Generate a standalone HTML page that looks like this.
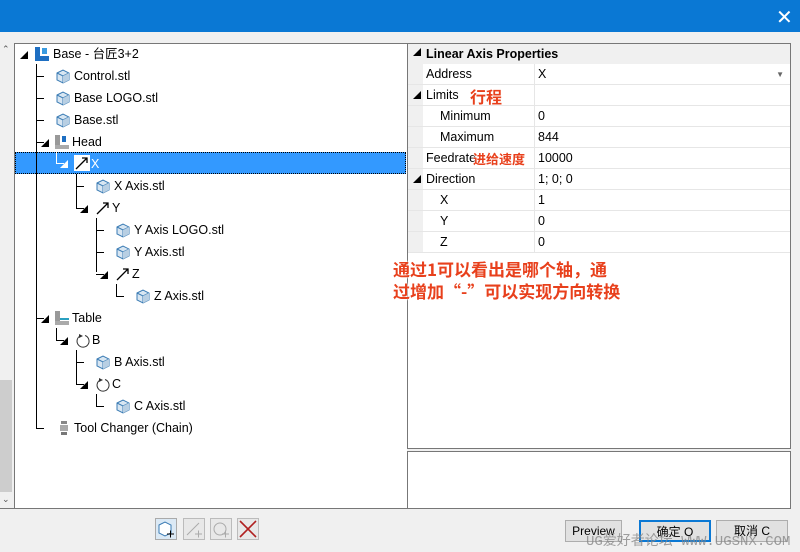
<!DOCTYPE html>
<html><head><meta charset="utf-8"><style>
*{margin:0;padding:0;box-sizing:border-box}
body{width:800px;height:552px;overflow:hidden;background:#f0f0f0;font-family:"Liberation Sans","Noto Sans CJK SC",sans-serif;font-size:12px;color:#000;position:relative}
.abs{position:absolute}
.t{position:absolute;white-space:nowrap;font-size:12.5px;line-height:22px}
.cube{position:absolute;width:16px;height:16px}
.vl{position:absolute;width:1px;background:#000}
.hl{position:absolute;height:1px;background:#000}
.row{position:absolute;left:408px;width:382px;height:21px;border-bottom:1px solid #e6e6e6;font-size:12.5px;line-height:21px}
.row .n{position:absolute;left:18px}
.row .v{position:absolute;left:130px}
.row .sep{position:absolute;left:126px;top:0;width:1px;height:21px;background:#e6e6e6}
.ann{color:#e8401c;font-weight:bold;font-family:"Noto Sans CJK SC",sans-serif;text-shadow:0 0 2px #fff,0 0 2px #fff}
.btn{position:absolute;top:520px;height:22px;border:1px solid #adadad;background:#e1e1e1;font-size:12px;text-align:center;line-height:20px}
</style></head><body>
<div class="abs" style="left:0;top:0;width:800px;height:32px;background:#0a78d4"></div>
<div class="abs" style="left:776px;top:5px;color:#fff;font-size:20px">✕</div>

<!-- left scrollbar -->
<div class="abs" style="left:0;top:43px;width:13px;height:465px;background:#f0f0f0"></div>
<div class="abs" style="left:0;top:380px;width:12px;height:112px;background:#cdcdcd"></div>
<div class="abs" style="left:2px;top:44px;font-size:9px;color:#555">⌃</div>
<div class="abs" style="left:2px;top:494px;font-size:9px;color:#555">⌄</div>
<!-- tree panel -->
<div class="abs" style="left:14px;top:43px;width:393px;height:466px;background:#fff;border-left:1px solid #777;border-top:1px solid #777;border-bottom:1px solid #777"></div>
<div class="abs" style="left:15px;top:152px;width:391px;height:22px;background:#3399ff;outline:1px dotted #000;outline-offset:-1px"></div>

<!-- tree lines -->
<div class="vl" style="left:36px;top:64px;height:364px"></div>
<div class="hl" style="left:36px;top:76px;width:8px"></div>
<div class="hl" style="left:36px;top:98px;width:8px"></div>
<div class="hl" style="left:36px;top:120px;width:8px"></div>
<div class="hl" style="left:36px;top:142px;width:8px"></div>
<div class="hl" style="left:36px;top:318px;width:8px"></div>
<div class="hl" style="left:36px;top:428px;width:8px"></div>
<div class="vl" style="left:56px;top:152px;height:11px;background:#fff"></div>
<div class="hl" style="left:56px;top:163px;width:8px;background:#fff"></div>
<div class="vl" style="left:56px;top:328px;height:12px"></div>
<div class="hl" style="left:56px;top:340px;width:8px"></div>
<div class="vl" style="left:76px;top:174px;height:34px"></div>
<div class="hl" style="left:76px;top:186px;width:8px"></div>
<div class="hl" style="left:76px;top:208px;width:8px"></div>
<div class="vl" style="left:96px;top:218px;height:54px"></div>
<div class="hl" style="left:96px;top:230px;width:8px"></div>
<div class="hl" style="left:96px;top:252px;width:8px"></div>
<div class="hl" style="left:96px;top:274px;width:8px"></div>
<div class="vl" style="left:116px;top:284px;height:12px"></div>
<div class="hl" style="left:116px;top:296px;width:8px"></div>
<div class="vl" style="left:76px;top:350px;height:34px"></div>
<div class="hl" style="left:76px;top:362px;width:8px"></div>
<div class="hl" style="left:76px;top:384px;width:8px"></div>
<div class="vl" style="left:96px;top:394px;height:12px"></div>
<div class="hl" style="left:96px;top:406px;width:8px"></div>

<!-- expanders -->
<div class="abs" style="left:20px;top:50px;font-size:8px">◢</div>
<div class="abs" style="left:41px;top:138px;font-size:8px">◢</div>
<div class="abs" style="left:60px;top:159px;font-size:8px;color:#fff">◢</div>
<div class="abs" style="left:80px;top:204px;font-size:8px">◢</div>
<div class="abs" style="left:100px;top:270px;font-size:8px">◢</div>
<div class="abs" style="left:41px;top:314px;font-size:8px">◢</div>
<div class="abs" style="left:60px;top:336px;font-size:8px">◢</div>
<div class="abs" style="left:80px;top:380px;font-size:8px">◢</div>

<svg width="0" height="0" style="position:absolute"><defs>
<g id="cb"><path d="M2 5 L8 2 L14 5 L14 12 L8 15 L2 12Z" fill="#d8e6f2" stroke="#3a7bb4"/><path d="M2 5 L8 8 L14 5 M8 8 V15" fill="none" stroke="#3a7bb4"/><path d="M8 8 L14 5 L14 12 L8 15Z" fill="#b8cfe3"/></g>
</defs></svg>

<svg class="cube" style="left:34px;top:46px" viewBox="0 0 16 16"><rect x="1" y="1" width="5" height="12" fill="#1e6fc2"/><rect x="1" y="10" width="14" height="5" fill="#1e6fc2"/><rect x="8" y="2" width="5" height="6" fill="#3a9be0"/></svg>
<svg class="cube" style="left:55px;top:68px" viewBox="0 0 16 16"><use href="#cb"/></svg>
<svg class="cube" style="left:55px;top:90px" viewBox="0 0 16 16"><use href="#cb"/></svg>
<svg class="cube" style="left:55px;top:112px" viewBox="0 0 16 16"><use href="#cb"/></svg>
<svg class="cube" style="left:54px;top:134px" viewBox="0 0 16 16"><rect x="1" y="1" width="5" height="12" fill="#999"/><rect x="1" y="11" width="14" height="4" fill="#aaa"/><rect x="8" y="2" width="4" height="6" fill="#1e6fc2"/></svg>
<svg class="cube" style="left:74px;top:155px" viewBox="0 0 16 16"><rect width="16" height="16" fill="#fff"/><path d="M2 14 L13 3 M8 3 H13 V8" stroke="#000" stroke-width="1.3" fill="none"/></svg>
<svg class="cube" style="left:95px;top:178px" viewBox="0 0 16 16"><use href="#cb"/></svg>
<svg class="cube" style="left:95px;top:200px" viewBox="0 0 16 16"><path d="M2 14 L13 3 M8 3 H13 V8" stroke="#000" stroke-width="1.3" fill="none"/></svg>
<svg class="cube" style="left:115px;top:222px" viewBox="0 0 16 16"><use href="#cb"/></svg>
<svg class="cube" style="left:115px;top:244px" viewBox="0 0 16 16"><use href="#cb"/></svg>
<svg class="cube" style="left:115px;top:266px" viewBox="0 0 16 16"><path d="M2 14 L13 3 M8 3 H13 V8" stroke="#000" stroke-width="1.3" fill="none"/></svg>
<svg class="cube" style="left:135px;top:288px" viewBox="0 0 16 16"><use href="#cb"/></svg>
<svg class="cube" style="left:54px;top:310px" viewBox="0 0 16 16"><rect x="1" y="1" width="5" height="12" fill="#999"/><rect x="1" y="11" width="14" height="4" fill="#aaa"/><rect x="6" y="8" width="9" height="2" fill="#2aa0c0"/></svg>
<svg class="cube" style="left:75px;top:332px" viewBox="0 0 16 16"><path d="M5 4 A6 6 0 1 0 10 3.5" stroke="#333" fill="none"/><path d="M4 2 L8 4 L4 6Z" fill="#333"/></svg>
<svg class="cube" style="left:95px;top:354px" viewBox="0 0 16 16"><use href="#cb"/></svg>
<svg class="cube" style="left:95px;top:376px" viewBox="0 0 16 16"><path d="M5 4 A6 6 0 1 0 10 3.5" stroke="#333" fill="none"/><path d="M4 2 L8 4 L4 6Z" fill="#333"/></svg>
<svg class="cube" style="left:115px;top:398px" viewBox="0 0 16 16"><use href="#cb"/></svg>
<svg class="cube" style="left:56px;top:420px" viewBox="0 0 16 16"><rect x="5" y="1" width="6" height="3" fill="#888"/><rect x="4" y="5" width="8" height="6" fill="#aaa"/><rect x="5" y="12" width="6" height="3" fill="#777"/></svg>

<div class="t" style="left:53px;top:43px">Base - 台匠3+2</div>
<div class="t" style="left:74px;top:65px">Control.stl</div>
<div class="t" style="left:74px;top:87px">Base LOGO.stl</div>
<div class="t" style="left:74px;top:109px">Base.stl</div>
<div class="t" style="left:72px;top:131px">Head</div>
<div class="t" style="left:91px;top:153px;color:#fff">X</div>
<div class="t" style="left:114px;top:175px">X Axis.stl</div>
<div class="t" style="left:112px;top:197px">Y</div>
<div class="t" style="left:134px;top:219px">Y Axis LOGO.stl</div>
<div class="t" style="left:134px;top:241px">Y Axis.stl</div>
<div class="t" style="left:132px;top:263px">Z</div>
<div class="t" style="left:154px;top:285px">Z Axis.stl</div>
<div class="t" style="left:72px;top:307px">Table</div>
<div class="t" style="left:92px;top:329px">B</div>
<div class="t" style="left:114px;top:351px">B Axis.stl</div>
<div class="t" style="left:112px;top:373px">C</div>
<div class="t" style="left:134px;top:395px">C Axis.stl</div>
<div class="t" style="left:74px;top:417px">Tool Changer (Chain)</div>

<!-- property grid -->
<div class="abs" style="left:407px;top:43px;width:384px;height:406px;background:#fff;border:1px solid #777"></div>
<div class="abs" style="left:408px;top:44px;width:382px;height:20px;background:#f0f0f0"></div>
<div class="abs" style="left:408px;top:64px;width:15px;height:189px;background:#f0f0f0"></div>
<div class="abs" style="left:413px;top:47px;font-size:8px">◢</div>
<div class="abs" style="left:426px;top:44px;font-weight:bold;font-size:12.5px;line-height:20px">Linear Axis Properties</div>
<div class="row" style="top:64px"><span class="n">Address</span><span class="sep"></span><span class="v">X</span><span style="position:absolute;right:6px;font-size:8px;color:#666">▼</span></div>
<div class="row" style="top:85px"><span class="n">Limits</span><span class="sep"></span></div>
<div class="row" style="top:106px"><span class="n" style="left:32px">Minimum</span><span class="sep"></span><span class="v">0</span></div>
<div class="row" style="top:127px"><span class="n" style="left:32px">Maximum</span><span class="sep"></span><span class="v">844</span></div>
<div class="row" style="top:148px"><span class="n">Feedrate</span><span class="sep"></span><span class="v">10000</span></div>
<div class="row" style="top:169px"><span class="n">Direction</span><span class="sep"></span><span class="v">1; 0; 0</span></div>
<div class="row" style="top:190px"><span class="n" style="left:32px">X</span><span class="sep"></span><span class="v">1</span></div>
<div class="row" style="top:211px"><span class="n" style="left:32px">Y</span><span class="sep"></span><span class="v">0</span></div>
<div class="row" style="top:232px"><span class="n" style="left:32px">Z</span><span class="sep"></span><span class="v">0</span></div>
<div class="abs" style="left:413px;top:90px;font-size:8px">◢</div>
<div class="abs" style="left:413px;top:174px;font-size:8px">◢</div>
<div class="abs ann" style="left:470px;top:84px;font-size:16px">行程</div>
<div class="abs ann" style="left:473px;top:149px;font-size:13px">进给速度</div>
<div class="abs ann" style="left:393px;top:258px;font-size:17px;line-height:22px">通过1可以看出是哪个轴，通<br>过增加“-”可以实现方向转换</div>

<div class="abs" style="left:407px;top:451px;width:384px;height:58px;background:#fff;border:1px solid #777"></div>
<div class="abs" style="left:0;top:508px;width:407px;height:1px;background:#777"></div>

<!-- bottom icons -->
<svg class="abs" style="left:155px;top:518px" width="22" height="22" viewBox="0 0 22 22"><rect x="0.5" y="0.5" width="21" height="21" fill="#dbe9f5" stroke="#aaa"/><path d="M4 7 L10 4 L16 7 L16 15 L10 18 L4 15Z" fill="#fff" stroke="#3a7bb4"/><path d="M12 16 H19 M15.5 12.5 V19.5" stroke="#000"/></svg>
<svg class="abs" style="left:183px;top:518px" width="22" height="22" viewBox="0 0 22 22"><rect x="0.5" y="0.5" width="21" height="21" fill="#e8e8e8" stroke="#bbb"/><path d="M4 17 L16 5" stroke="#aaa"/><path d="M12 16 H19 M15.5 12.5 V19.5" stroke="#aaa"/></svg>
<svg class="abs" style="left:210px;top:518px" width="22" height="22" viewBox="0 0 22 22"><rect x="0.5" y="0.5" width="21" height="21" fill="#e8e8e8" stroke="#bbb"/><circle cx="10" cy="11" r="6" stroke="#aaa" fill="none"/><path d="M12 16 H19 M15.5 12.5 V19.5" stroke="#aaa"/></svg>
<svg class="abs" style="left:237px;top:518px" width="22" height="22" viewBox="0 0 22 22"><rect x="0.5" y="0.5" width="21" height="21" fill="#e8e8e8" stroke="#bbb"/><path d="M3 3 L19 19 M19 3 L3 19" stroke="#b02020" stroke-width="1.6"/></svg>

<div class="btn" style="left:565px;width:57px">Preview</div>
<div class="btn" style="left:639px;width:72px;border:2px solid #0a78d4">确定 O</div>
<div class="btn" style="left:716px;width:72px">取消 C</div>
<div class="abs" style="left:586px;top:530px;font-size:14px;color:#888;opacity:.8;font-family:'Liberation Mono','Noto Sans CJK SC',monospace">UG爱好者论坛 WWW.UGSNX.COM</div>
</body></html>
